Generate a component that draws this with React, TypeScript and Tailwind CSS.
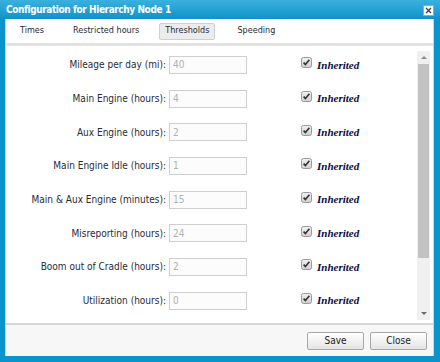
import React from "react";

const rows = [
  ["Mileage per day (mi):", "40"],
  ["Main Engine (hours):", "4"],
  ["Aux Engine (hours):", "2"],
  ["Main Engine Idle (hours):", "1"],
  ["Main & Aux Engine (minutes):", "15"],
  ["Misreporting (hours):", "24"],
  ["Boom out of Cradle (hours):", "2"],
  ["Utilization (hours):", "0"],
];

function Check() {
  return (
    <svg width="11" height="11" viewBox="0 0 11 11" className="block">
      <defs>
        <linearGradient id="cb" x1="0" y1="0" x2="0" y2="1">
          <stop offset="0" stopColor="#f2f2f2" />
          <stop offset="1" stopColor="#cfcfcf" />
        </linearGradient>
      </defs>
      <rect x="0.5" y="0.5" width="10" height="10" rx="2" fill="url(#cb)" stroke="#9a9a9a" />
      <path d="M2.6 5.6 L4.4 7.6 L8.4 2.8" fill="none" stroke="#333" strokeWidth="1.6" />
    </svg>
  );
}

export default function App() {
  return (
    <div
      className="w-[440px] h-[362px] bg-[#0b93cb] flex flex-col text-[10px] text-[#333]"
      style={{ fontFamily: '"DejaVu Sans Condensed", "Liberation Sans", sans-serif' }}
    >
      <div className="h-[19px] shrink-0 flex items-center justify-between pl-[6px] pr-[6px] bg-gradient-to-b from-[#39b1de] to-[#0b92cb]">
        <span className="text-white font-bold text-[10px] leading-none tracking-[-0.4px]">Configuration for Hierarchy Node 1</span>
        <div className="w-[11px] h-[11px] bg-white border border-[#9aa] flex items-center justify-center mt-[1px]">
          <svg width="7" height="7" viewBox="0 0 7 7">
            <path d="M1 1 L6 6 M6 1 L1 6" stroke="#444" strokeWidth="1.4" />
          </svg>
        </div>
      </div>
      <div className="flex-1 ml-[5px] mr-[6px] mb-[6px] bg-white flex flex-col border-l border-r border-[#d4d4d4]">
        <div className="h-[24px] shrink-0 flex items-center pl-[7px] text-[9px] text-[#2a2a35]">
          <div className="px-[7px] h-[17px] flex items-center">Times</div>
          <div className="ml-[15px] px-[7px] h-[17px] flex items-center">Restricted hours</div>
          <div className="ml-[13px] px-[5px] h-[17px] flex items-center bg-[#ececec] border border-[#cfcfcf] rounded-[2px]">Thresholds</div>
          <div className="ml-[15px] px-[7px] h-[17px] flex items-center">Speeding</div>
        </div>
        <div className="h-[3px] shrink-0 bg-[#e3e3e3]" />
        <div className="flex-1 flex min-h-0">
          <div className="flex-1 flex flex-col pt-[2px]">
            {rows.map(([label, val]) => (
              <div key={label} className="h-[33.7px] flex items-center">
                <div className="w-[163px] text-right text-[#2a2a35] pr-[3px]">{label}</div>
                <div className="w-[78px] h-[18px] border border-[#cfcfcf] bg-[#fcfcfc] flex items-center pl-[3px] text-[#b0b0b0]">
                  {val}
                </div>
                <div className="ml-[54px] -mt-[4px]">
                  <Check />
                </div>
                <span
                  className="ml-[5px] font-bold italic text-[11px] text-[#0c0c40]"
                  style={{ fontFamily: '"Liberation Serif", "Times New Roman", serif' }}
                >
                  Inherited
                </span>
              </div>
            ))}
          </div>
          <div className="w-[13px] mt-[5px] mb-[3px] mr-[3px] bg-[#f0f0f0] flex flex-col items-center">
            <div className="h-[13px] w-full flex items-center justify-center">
              <div className="w-0 h-0 border-l-[3px] border-r-[3px] border-b-[3px] border-l-transparent border-r-transparent border-b-[#8a8a8a]" />
            </div>
            <div className="w-[11px] h-[194px] bg-[#c2c2c2]" />
            <div className="flex-1" />
            <div className="h-[13px] w-full flex items-center justify-center">
              <div className="w-0 h-0 border-l-[3px] border-r-[3px] border-t-[3px] border-l-transparent border-r-transparent border-t-[#6a6a6a]" />
            </div>
          </div>
        </div>
        <div className="h-[33px] shrink-0 border-t-2 border-[#d6d6d6] bg-[#f7f7f7] flex items-center justify-end pr-[6px] gap-[6px]">
          <button className="w-[57px] h-[18px] border border-[#a8a8a8] rounded-[2px] bg-gradient-to-b from-white to-[#e4e4e4] text-[10px] text-[#222]">Save</button>
          <button className="w-[57px] h-[18px] border border-[#a8a8a8] rounded-[2px] bg-gradient-to-b from-white to-[#e4e4e4] text-[10px] text-[#222]">Close</button>
        </div>
      </div>
    </div>
  );
}
